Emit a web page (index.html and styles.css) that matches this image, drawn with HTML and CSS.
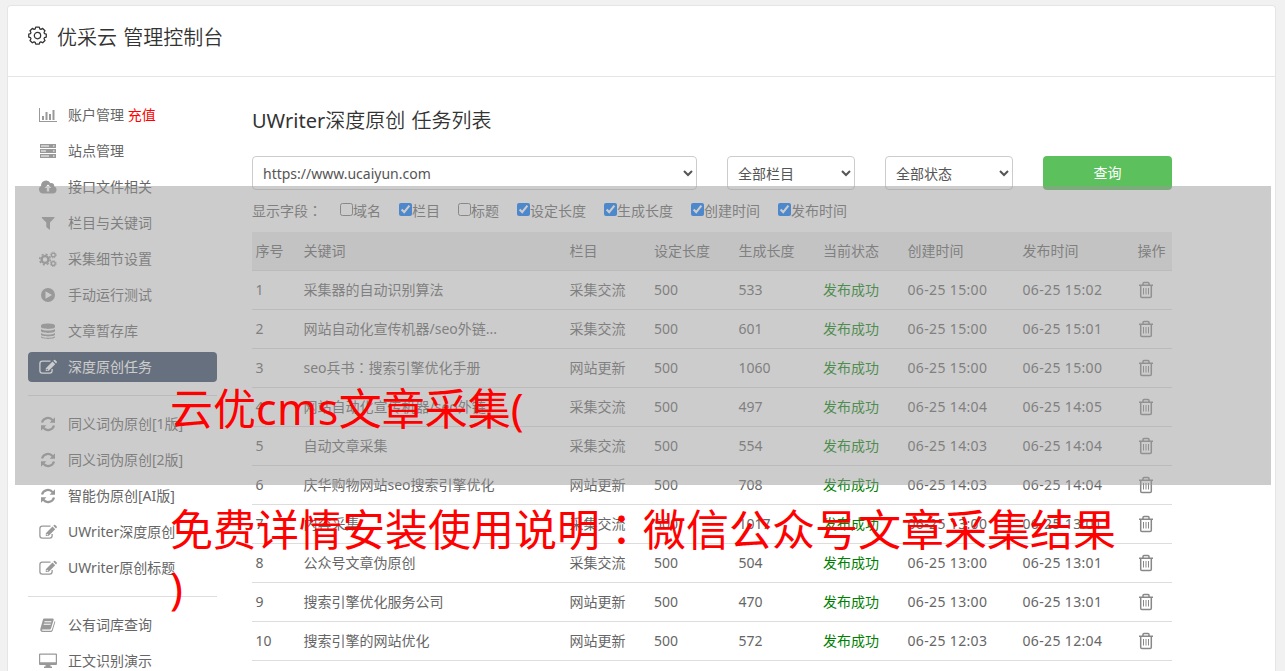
FILE: index.html
```html
<!DOCTYPE html>
<html lang="zh-CN">
<head>
<meta charset="utf-8">
<title>优采云 管理控制台</title>
<link rel="stylesheet" href="styles.css">
</head>
<body>
<svg class="sprite" xmlns="http://www.w3.org/2000/svg">
  <symbol id="gear" viewBox="0 0 18 18"><g fill="none" stroke="currentColor" stroke-width="1.2"><path d="M7.300 1h3.400l.5 1.800 1 .4 1.700-.9 2.200 2.200-.9 1.600.4 1.100 1.700.5v2.800l-1.700.5-.4 1.100.9 1.600-2.200 2.200-1.700-.9-1 .4-.5 1.800H7.300l-.5-1.800-1-.4-1.700.9-2.200-2.200.9-1.600-.4-1.100-1.700-.5V7.700l1.700-.5.4-1.100-.9-1.600 2.200-2.200 1.700.9 1-.4z" stroke-linejoin="round"/><circle cx="9" cy="9.100" r="3"/></g></symbol>
  <symbol id="chart" viewBox="0 0 20 16"><path fill="currentColor" d="M1 1h1v13h17v1H1zM4 9h2v4H4zM7.500 5h2v8h-2zM11 7h2v6h-2zM14.500 3h2v10h-2z"/></symbol>
  <symbol id="server" viewBox="0 0 20 16"><path fill="currentColor" fill-rule="evenodd" d="M2 1h16v4H2zM3 2.500v1h8v-1zM15 2.500v1h1.500v-1zM2 6h16v4H2zM3 7.500v1h5v-1zM15 7.500v1h1.500v-1zM2 11h16v4H2zM3 12.500v1h8v-1zM15 12.500v1h1.500v-1z"/></symbol>
  <symbol id="cloud" viewBox="0 0 20 16"><path fill="currentColor" fill-rule="evenodd" d="M5 14.500a4 4 0 0 1-1.900-7.500A5 5 0 0 1 12.500 4.200a2.700 2.700 0 0 1 3.600 3.300A3.600 3.600 0 0 1 15 14.500zM10 5.500 6.500 9h2.300v3.500h2.400V9h2.300z"/></symbol>
  <symbol id="filter" viewBox="0 0 20 16"><path fill="currentColor" d="M4 2h12.300q.6.400 0 1L12 7.500v6.700q-.2.700-.8.300L8.300 12V7.500L3.800 3q-.4-.600.200-1z"/></symbol>
  <symbol id="cogs" viewBox="0 0 20 16"><g fill="none" stroke="currentColor"><circle cx="7" cy="8.500" r="3.400" stroke-width="2.400"/><circle cx="7" cy="8.500" r="5.300" stroke-width="1.500" stroke-dasharray="2.080 2.080"/><circle cx="15.300" cy="4" r="1.900" stroke-width="1.300"/><circle cx="15.300" cy="4" r="2.900" stroke-width="1" stroke-dasharray="1.140 1.140"/><circle cx="15.300" cy="12.600" r="1.900" stroke-width="1.300"/><circle cx="15.300" cy="12.600" r="2.900" stroke-width="1" stroke-dasharray="1.140 1.140"/></g></symbol>
  <symbol id="play" viewBox="0 0 20 16"><path fill="currentColor" fill-rule="evenodd" d="M10 1a7 7 0 1 1 0 14 7 7 0 0 1 0-14zM7.500 4.300v7.400L14 8z"/></symbol>
  <symbol id="database" viewBox="0 0 20 16"><path fill="currentColor" d="M3 2.500C3-.2 17-.2 17 2.500V4C17 6.500 3 6.500 3 4zM3 6c2.500 2 11.500 2 14 0v2c0 2.500-14 2.500-14 0zM3 10c2.500 2 11.500 2 14 0v1.500c0 2.500-14 2.500-14 0zM3 13.300c2.500 2 11.500 2 14 0v.7c0 2.500-14 2.500-14 0z"/></symbol>
  <symbol id="edit" viewBox="0 0 20 16"><path fill="none" stroke="currentColor" stroke-width="1.300" d="M12.500 2.200H4.300A2.400 2.400 0 0 0 1.900 4.600v7.200a2.400 2.400 0 0 0 2.400 2.400h7.400a2.400 2.400 0 0 0 2.400-2.400V10"/><path fill="currentColor" fill-rule="evenodd" d="M14.500 2.500l2.700 2.700-6.700 6.700H7.800V9.200zM9 9.700l-.4.400v.8h.8v.5h.5l.5-.400zM15.300 1.700l.7-.7q.6-.5 1.200 0L18.700 2.500q.5.600 0 1.200l-.7.700z"/></symbol>
  <symbol id="refresh" viewBox="0 0 20 16"><path fill="none" stroke="currentColor" stroke-width="2.200" d="M4 6.500a6.200 6.200 0 0 1 10.700-2.300M16 9.500a6.200 6.200 0 0 1-10.700 2.300"/><path fill="currentColor" d="M17 1.300v5.400h-5.400zM3 14.700V9.300h5.400z"/></symbol>
  <symbol id="book" viewBox="0 0 20 16"><path fill="currentColor" fill-rule="evenodd" d="M6 1.500h8.800q1.200.2.900 1.200L13 11.500q-.3 1-1.300 1H4.500q-.9 0-.7.600.2.600 1.200.6h7.800q.7 0 1-.7L16.700 4q.8.400.5 1.300l-2.600 8.500q-.3 1.100-1.500 1.200H4.500Q2 14.600 2.300 12L5 2.500q.3-.9 1-1zM6.600 4.300l-.3.900h6.900l.3-.900zM5.900 6.800l-.3.900h6.900l.3-.900z"/></symbol>
  <symbol id="desktop" viewBox="0 0 20 16"><path fill="currentColor" fill-rule="evenodd" d="M2 .5h16a1 1 0 0 1 1 1V11a1 1 0 0 1-1 1h-5.500v1.500H14V15H6v-1.500h1.500V12H2a1 1 0 0 1-1-1V1.500a1 1 0 0 1 1-1zM2.200 1.700v7.600h15.600V1.700z"/></symbol>
  <symbol id="trash" viewBox="0 0 16 18"><path fill="none" stroke="currentColor" stroke-width="1.500" d="M1 4.200h14M5 4V2.600q0-1 1-1h4q1 0 1 1V4M2.700 4.500v10.700q0 1.300 1.300 1.300h8q1.300 0 1.300-1.300V4.500"/><path stroke="currentColor" d="M5.500 7v6.500M8 7v6.500M10.500 7v6.500"/></symbol>
</svg>

<div class="panel">
  <header class="top"><svg class="top-icon"><use href="#gear"/></svg><h1 class="top-title">优采云 管理控制台</h1></header>
  <div class="content">
    <nav class="side">
      <a class="item"><svg class="ico"><use href="#chart"/></svg><span>账户管理 <b class="pay">充值</b></span></a>
      <a class="item"><svg class="ico"><use href="#server"/></svg><span>站点管理</span></a>
      <a class="item"><svg class="ico"><use href="#cloud"/></svg><span>接口文件相关</span></a>
      <a class="item"><svg class="ico"><use href="#filter"/></svg><span>栏目与关键词</span></a>
      <a class="item"><svg class="ico"><use href="#cogs"/></svg><span>采集细节设置</span></a>
      <a class="item"><svg class="ico"><use href="#play"/></svg><span>手动运行测试</span></a>
      <a class="item"><svg class="ico"><use href="#database"/></svg><span>文章暂存库</span></a>
      <a class="item active"><svg class="ico"><use href="#edit"/></svg><span>深度原创任务</span></a>
      <hr class="rule">
      <a class="item"><svg class="ico"><use href="#refresh"/></svg><span>同义词伪原创[1版]</span></a>
      <a class="item"><svg class="ico"><use href="#refresh"/></svg><span>同义词伪原创[2版]</span></a>
      <a class="item"><svg class="ico"><use href="#refresh"/></svg><span>智能伪原创[AI版]</span></a>
      <a class="item"><svg class="ico"><use href="#edit"/></svg><span>UWriter深度原创</span></a>
      <a class="item"><svg class="ico"><use href="#edit"/></svg><span>UWriter原创标题</span></a>
      <hr class="rule">
      <a class="item"><svg class="ico"><use href="#book"/></svg><span>公有词库查询</span></a>
      <a class="item"><svg class="ico"><use href="#desktop"/></svg><span>正文识别演示</span></a>
    </nav>
    <main class="main">
      <h2 class="title"><span class="brand">UWriter</span>深度原创 任务列表</h2>
      <div class="filters">
        <select class="pick"><option>https://www.ucaiyun.com</option></select>
        <select class="pick"><option>全部栏目</option></select>
        <select class="pick"><option>全部状态</option></select>
        <button class="query">查询</button>
      </div>
      <div class="fields">
        <span>显示字段<span class="mid" lang="zh-TW">：</span></span>
        <label class="field"><input class="check" type="checkbox">域名</label>
        <label class="field"><input class="check" type="checkbox" checked>栏目</label>
        <label class="field"><input class="check" type="checkbox">标题</label>
        <label class="field"><input class="check" type="checkbox" checked>设定长度</label>
        <label class="field"><input class="check" type="checkbox" checked>生成长度</label>
        <label class="field"><input class="check" type="checkbox" checked>创建时间</label>
        <label class="field"><input class="check" type="checkbox" checked>发布时间</label>
      </div>
      <table class="tasks">
        <colgroup><col class="c-no"><col class="c-key"><col class="c-mid"><col class="c-mid"><col class="c-mid"><col class="c-mid"><col class="c-time"><col class="c-time"><col class="c-op"></colgroup>
        <thead><tr><th>序号</th><th>关键词</th><th>栏目</th><th>设定长度</th><th>生成长度</th><th>当前状态</th><th>创建时间</th><th>发布时间</th><th>操作</th></tr></thead>
        <tbody>
          <tr><td>1</td><td>采集器的自动识别算法</td><td>采集交流</td><td>500</td><td>533</td><td class="ok">发布成功</td><td class="time">06-25 15:00</td><td class="time">06-25 15:02</td><td><svg class="bin"><use href="#trash"/></svg></td></tr>
          <tr><td>2</td><td>网站自动化宣传机器/seo外链...</td><td>采集交流</td><td>500</td><td>601</td><td class="ok">发布成功</td><td class="time">06-25 15:00</td><td class="time">06-25 15:01</td><td><svg class="bin"><use href="#trash"/></svg></td></tr>
          <tr><td>3</td><td>seo兵书<span class="mid" lang="zh-TW">：</span>搜索引擎优化手册</td><td>网站更新</td><td>500</td><td>1060</td><td class="ok">发布成功</td><td class="time">06-25 15:00</td><td class="time">06-25 15:00</td><td><svg class="bin"><use href="#trash"/></svg></td></tr>
          <tr><td>4</td><td>网站自动化宣传机器/seo外链...</td><td>采集交流</td><td>500</td><td>497</td><td class="ok">发布成功</td><td class="time">06-25 14:04</td><td class="time">06-25 14:05</td><td><svg class="bin"><use href="#trash"/></svg></td></tr>
          <tr><td>5</td><td>自动文章采集</td><td>采集交流</td><td>500</td><td>554</td><td class="ok">发布成功</td><td class="time">06-25 14:03</td><td class="time">06-25 14:04</td><td><svg class="bin"><use href="#trash"/></svg></td></tr>
          <tr><td>6</td><td>庆华购物网站seo搜索引擎优化</td><td>网站更新</td><td>500</td><td>708</td><td class="ok">发布成功</td><td class="time">06-25 14:03</td><td class="time">06-25 14:04</td><td><svg class="bin"><use href="#trash"/></svg></td></tr>
          <tr><td>7</td><td>内容采集</td><td>采集交流</td><td>500</td><td>1017</td><td class="ok">发布成功</td><td class="time">06-25 13:00</td><td class="time">06-25 13:01</td><td><svg class="bin"><use href="#trash"/></svg></td></tr>
          <tr><td>8</td><td>公众号文章伪原创</td><td>采集交流</td><td>500</td><td>504</td><td class="ok">发布成功</td><td class="time">06-25 13:00</td><td class="time">06-25 13:01</td><td><svg class="bin"><use href="#trash"/></svg></td></tr>
          <tr><td>9</td><td>搜索引擎优化服务公司</td><td>网站更新</td><td>500</td><td>470</td><td class="ok">发布成功</td><td class="time">06-25 13:00</td><td class="time">06-25 13:01</td><td><svg class="bin"><use href="#trash"/></svg></td></tr>
          <tr><td>10</td><td>搜索引擎的网站优化</td><td>网站更新</td><td>500</td><td>572</td><td class="ok">发布成功</td><td class="time">06-25 12:03</td><td class="time">06-25 12:04</td><td><svg class="bin"><use href="#trash"/></svg></td></tr>
        </tbody>
      </table>
    </main>
  </div>
</div>

<div class="shade"></div>
<div class="caption">
  <p class="line first">云优<span class="latin">cms</span>文章采集(</p>
  <p class="line">免费详情安装使用说明<span class="colon" lang="zh-TW">：</span>微信公众号文章采集结果</p>
  <p class="line last">)</p>
</div>
</body>
</html>
```
FILE: styles.css
```css
* { box-sizing: border-box; }
html { height: 671px; overflow: hidden; }
body {
  height: 671px;
  margin: 0;
  padding: 5px 9px 0 7px;
  overflow: hidden;
  position: relative;
  background: #f1f1f1;
  color: #666;
  font: 400 14px/20px "Noto Sans", "Noto Sans CJK SC", sans-serif;
}
.sprite { position: absolute; width: 0; height: 0; }
.mid, .colon { font-family: "Noto Sans CJK TC", sans-serif; line-height: 1; }

.panel {
  height: 666px;
  overflow: hidden;
  background: #fff;
  border: 1px solid #e5e5e5;
  border-bottom: 0;
  border-radius: 4px 4px 0 0;
}
.top {
  display: flex;
  align-items: center;
  gap: 10px;
  height: 71px;
  padding: 0 20px 7px;
  border-bottom: 1px solid #e5e5e5;
  color: #333;
}
.top-icon { width: 19px; height: 19px; margin-top: -4px; }
.top-title { margin: 0; font-size: 20px; font-weight: 350; line-height: 28px; word-spacing: 1px; }

.content { display: flex; padding: 23px 20px 0; }
.side { width: 189px; margin-right: 35px; flex: none; }
.item {
  display: flex;
  align-items: center;
  height: 30px;
  margin-bottom: 6px;
  padding-left: 10px;
  border-radius: 4px;
  white-space: nowrap;
}
.ico { width: 20px; height: 16px; margin-right: 10px; color: #999; }
.pay { color: #f00; font-weight: 400; }
.active { background: #344763; color: #fff; }
.active .ico { color: #fff; }
.rule { height: 1px; margin: 13px 0; border: 0; background: #ddd; }

.main { width: 920px; }
.title { margin: 7px 0 21px; font-size: 20px; font-weight: 350; line-height: 28px; color: #333; word-spacing: 1px; }
.brand { font-weight: 400; }
.filters { display: grid; grid-template-columns: 445px 128px 128px 129px; gap: 30px; }
.pick {
  height: 34px;
  padding: 0 6px;
  border: 1px solid #ccc;
  border-radius: 4px;
  background: #fff;
  color: #555;
  font: inherit;
}
.query { height: 34px; border: 0; border-radius: 4px; background: #5cc05c; color: #fff; font: inherit; }
.fields { display: flex; align-items: center; gap: 18px; height: 42px; }
.field { display: flex; align-items: center; }
.check { width: 13px; height: 13px; margin: 0 0 3px; }

.tasks { width: 920px; table-layout: fixed; border-collapse: separate; border-spacing: 0; }
.c-no { width: 48px; }
.c-key { width: 266px; }
.c-mid { width: 84.5px; }
.c-time { width: 115px; }
.c-op { width: 38px; }
.tasks th, .tasks td {
  height: 39px;
  padding: 0 3px 0 3.5px;
  border-bottom: 1px solid #ddd;
  text-align: left;
  font-weight: 400;
  white-space: nowrap;
}
.tasks th { background: #ededed; }
.tasks .ok { color: #008000; }
.time { letter-spacing: .35px; }
.bin { display: block; width: 16px; height: 18px; color: #888; }

.shade {
  position: absolute;
  left: 15px;
  top: 186px;
  width: 1256px;
  height: 299px;
  background: rgba(153, 153, 153, .5);
}
.caption {
  position: absolute;
  left: 170px;
  top: 379px;
  color: #f00;
  font-size: 43px;
  white-space: nowrap;
}
.line { margin: 0; height: 60px; line-height: 60px; }
.first { margin-bottom: 61px; }
.last { margin-top: -2px; }
.latin { letter-spacing: .4px; }
```
